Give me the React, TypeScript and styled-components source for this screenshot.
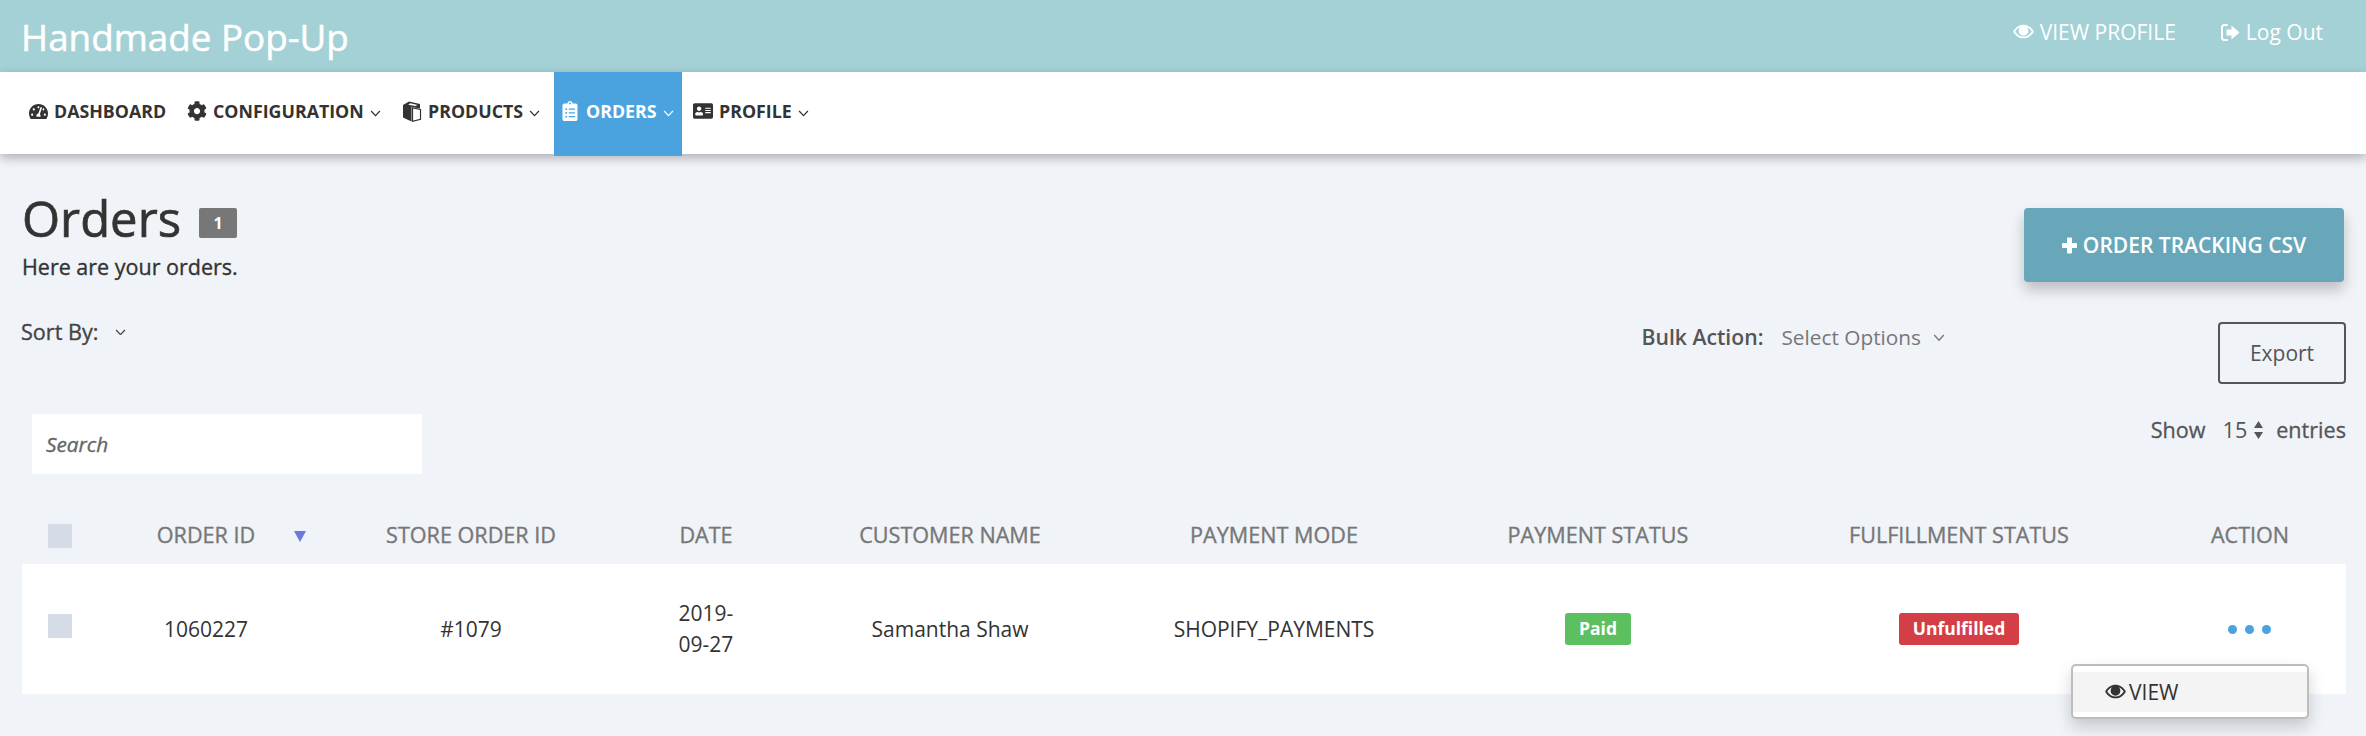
import React from "react";
import styled, { createGlobalStyle, css } from "styled-components";
import { FaTachometerAlt, FaCog, FaClipboardList, FaAddressCard } from "react-icons/fa";

const Global = createGlobalStyle`
  html, body { margin: 0; padding: 0; background: #f0f3f8; }
  body { font-family: "Open Sans", "Liberation Sans", sans-serif; color: #333; overflow: hidden; }
  * { box-sizing: border-box; }
`;

const medium = (w: number) => css`
  font-weight: 400;
  -webkit-text-stroke: ${w}px currentColor;
`;

const Page = styled.div`
  width: 2366px;
  height: 736px;
  overflow: hidden;
  background: #f0f3f8;
`;

const TopBar = styled.header`
  height: 72px;
  background: #a3d1d5;
  color: #fff;
  display: flex;
  align-items: center;
  justify-content: space-between;
  padding: 0 43px 0 21px;
`;

const Brand = styled.div`
  font-size: 36.8px;
  ${medium(0.5)}
  line-height: 72px;
  margin-top: 2px;
`;

const TopLinks = styled.div`
  display: flex;
  gap: 44px;
  margin-top: -8px;
`;

const TopLink = styled.a`
  display: flex;
  align-items: center;
  gap: 6px;
  font-size: 21px;
  color: #fff;
`;

const NavBar = styled.nav`
  position: relative;
  z-index: 2;
  height: 82px;
  background: #fff;
  box-shadow: 0 4px 10px rgba(0, 0, 0, 0.28);
  display: flex;
  align-items: flex-start;
  padding-left: 20px;
`;

const NavItem = styled.a<{ $active?: boolean; $w: number; $pad: number }>`
  width: ${(p) => p.$w}px;
  height: 84px;
  padding-left: ${(p) => p.$pad}px;
  padding-bottom: 6px;
  display: flex;
  align-items: center;
  font-size: 17.8px;
  font-weight: 700;
  color: ${(p) => (p.$active ? "#fff" : "#333")};
  background: ${(p) => (p.$active ? "#4aa3df" : "transparent")};
`;

const NavIcon = styled.span`
  width: 20px;
  margin-right: 6px;
  display: flex;
  justify-content: center;
  flex: none;
`;

const Chevron = styled.svg<{ $size?: number }>`
  width: ${(p) => p.$size ?? 11}px;
  height: ${(p) => (p.$size ?? 11) * 0.62}px;
  margin-left: 6px;
  margin-top: 5px;
  flex: none;
`;

const Main = styled.main`
  padding: 35px 20px 0 22px;
`;

const HeadRow = styled.div`
  display: flex;
  justify-content: space-between;
  align-items: flex-start;
  height: 133px;
`;

const TitleLine = styled.div`
  display: flex;
  align-items: center;
  height: 58px;
`;

const Title = styled.h1`
  margin: 0;
  font-size: 49px;
  ${medium(0.7)}
  line-height: 58px;
  color: #333;
`;

const CountBadge = styled.span`
  margin-left: 18px;
  margin-top: 9px;
  width: 38px;
  height: 30px;
  display: flex;
  align-items: center;
  justify-content: center;
  background: #777;
  border-radius: 2px;
  color: #fff;
  font-size: 16px;
  font-weight: 700;
`;

const SubTitle = styled.p`
  margin: 5px 0 0;
  font-size: 21.5px;
  ${medium(0.35)}
  line-height: 30px;
  color: #333;
`;

const TrackButton = styled.button`
  width: 320px;
  height: 74px;
  margin: 19px 2px 0 0;
  border: 0;
  border-radius: 4px;
  background: #68a7ba;
  color: #fff;
  font-family: inherit;
  font-size: 21px;
  font-weight: 600;
  display: flex;
  align-items: center;
  justify-content: center;
  gap: 6px;
  box-shadow: 0 8px 14px rgba(0, 0, 0, 0.22);
`;

const Controls = styled.div`
  display: flex;
  justify-content: space-between;
  align-items: flex-start;
  height: 94px;
`;

const SortBy = styled.div`
  display: flex;
  align-items: center;
  height: 30px;
  margin: -6px 0 0 -1px;
  font-size: 21.6px;
  ${medium(0.35)}
  color: #444;
`;

const SortChevron = styled(Chevron)`
  margin-left: 17px;
  margin-top: 2px;
`;

const RightControls = styled.div`
  display: flex;
  align-items: flex-start;
`;

const BulkLabel = styled.span`
  font-size: 21.2px;
  font-weight: 600;
  color: #555;
  line-height: 30px;
`;

const BulkSelect = styled.span`
  display: flex;
  align-items: center;
  height: 30px;
  margin: 0 0 0 18px;
  font-size: 20.8px;
  color: #777;
`;

const BulkChevron = styled(Chevron)`
  margin-left: 12px;
  margin-top: 2px;
`;

const ExportButton = styled.button`
  width: 128px;
  height: 62px;
  margin: 0 0 0 273px;
  border: 2px solid #555;
  border-radius: 4px;
  background: transparent;
  color: #555;
  font-family: inherit;
  font-size: 21px;
`;

const SearchRow = styled.div`
  display: flex;
  justify-content: space-between;
  align-items: flex-start;
  height: 90px;
  margin-top: -2px;
`;

const SearchBox = styled.div`
  width: 390px;
  height: 60px;
  margin-left: 10px;
  padding-left: 14px;
  background: #fff;
  display: flex;
  align-items: center;
  font-size: 20.8px;
  font-style: italic;
  ${medium(0.35)}
  color: #666;
`;

const ShowEntries = styled.div`
  display: flex;
  align-items: center;
  height: 30px;
  font-size: 21.6px;
  ${medium(0.3)}
  color: #555;
`;

const ShowValue = styled.span`
  margin-left: 17px;
  -webkit-text-stroke: 0;
  color: #555;
`;

const Stepper = styled.svg`
  width: 11px;
  height: 20px;
  margin: 2px 12px 0 6px;
`;

const Columns = "76px 216px 314px 156px 332px 316px 332px 390px 192px";

const HeaderRow = styled.div`
  display: grid;
  grid-template-columns: ${Columns};
  align-items: center;
  height: 60px;
`;

const HeaderCell = styled.div`
  text-align: center;
  font-size: 21.6px;
  ${medium(0.35)}
  color: #777;
`;

const OrderHeader = styled(HeaderCell)`
  position: relative;
`;

const SortArrow = styled.span`
  position: absolute;
  left: 196px;
  top: 11px;
  width: 0;
  height: 0;
  border-left: 6px solid transparent;
  border-right: 6px solid transparent;
  border-top: 11px solid #6c7ae0;
`;

const BodyRow = styled.div`
  display: grid;
  grid-template-columns: ${Columns};
  align-items: center;
  height: 130px;
  background: #fff;
  position: relative;
`;

const Cell = styled.div`
  text-align: center;
  font-size: 21px;
  line-height: 31px;
  color: #333;
`;

const Check = styled.span`
  display: block;
  width: 24px;
  height: 24px;
  margin: 4px 0 0 26px;
  background: #d5dce8;
`;

const RowCheck = styled(Check)`
  margin-top: -6px;
`;

const StatusBadge = styled.span<{ $tone: string }>`
  display: inline-block;
  padding: 0 14px;
  height: 32px;
  line-height: 31px;
  border-radius: 3px;
  background: ${(p) => p.$tone};
  color: #fff;
  font-size: 17.5px;
  font-weight: 700;
`;

const StatusCell = styled(Cell)`
  margin-top: -1px;
`;

const Dots = styled.div`
  display: flex;
  justify-content: center;
  gap: 8px;
  margin-left: -2px;
`;

const Dot = styled.span`
  width: 9px;
  height: 9px;
  border-radius: 50%;
  background: #4aa3df;
`;

const Menu = styled.div`
  position: absolute;
  left: 2049px;
  top: 100px;
  width: 238px;
  height: 55px;
  padding: 6px 0;
  background: #fff;
  border: 2px solid #bdbdbd;
  border-radius: 5px;
  box-shadow: 0 8px 16px rgba(0, 0, 0, 0.18);
`;

const MenuItem = styled.div`
  height: 40px;
  padding-left: 32px;
  background: #f4f4f4;
  display: flex;
  align-items: center;
  gap: 3px;
  font-size: 21px;
  color: #333;
`;

const chevron = (stroke: string, size?: number, As: typeof Chevron = Chevron) => (
  <As $size={size} viewBox="0 0 11 7" fill="none">
    <path d="M1 1l4.5 4.8L10 1" stroke={stroke} strokeWidth="1.3" />
  </As>
);

const Eye = ({ size, color }: { size: number; color: string }) => (
  <svg width={size} height={size * 0.72} viewBox="0 0 28 20" fill={color}>
    <path fillRule="evenodd" d="M14 1C8.4 1 3.6 4.3 .6 9.2a1.6 1.6 0 0 0 0 1.6C3.6 15.700 8.400 19 14 19s10.400-3.300 13.400-8.200a1.600 1.600 0 0 0 0-1.600C24.400 4.300 19.600 1 14 1zM3 10c1.600-2.500 3.800-4.500 6.500-5.700A6.500 6.500 0 1 0 18.500 4.300C21.200 5.500 23.400 7.500 25 10c-2.600 4-6.500 6.700-11 6.700S5.600 14 3 10z" />
    <circle cx="12" cy="7.500" r="2.200" fill={color} />
  </svg>
);

const SignOut = () => (
  <svg width="20" height="19" viewBox="0 0 20 19" fill="none">
    <path d="M7 2H4.500A2.500 2.500 0 0 0 2 4.500v10A2.500 2.500 0 0 0 4.500 17H7" stroke="#fff" strokeWidth="2" strokeLinecap="round" />
    <path d="M11.500 2.500L19.500 9.500l-8 7v-4H6.500v-6h5z" fill="#fff" />
  </svg>
);

const Cube = () => (
  <svg width="20" height="21" viewBox="0 0 20 21">
    <path d="M1 4l6-3.500 11 2.500v4.500L9.500 5.800V20.500L1 16.500z" fill="#333" />
    <path d="M10.500 6.800l8 1.700v9.800l-8 2z" fill="#fff" stroke="#333" strokeWidth="1.200" />
    <path d="M8.200 2.300l7.500 1.600-2.500 1.200-7-1.400z" fill="#fff" />
  </svg>
);

const ThickPlus = () => (
  <svg width="15" height="17" viewBox="0 0 15 17" fill="#fff">
    <path d="M5 1.500A1 1 0 0 1 6 .5h3a1 1 0 0 1 1 1V6h4a1 1 0 0 1 1 1v3a1 1 0 0 1-1 1h-4v4.500a1 1 0 0 1-1 1H6a1 1 0 0 1-1-1V11H1a1 1 0 0 1-1-1V7a1 1 0 0 1 1-1h4z" />
  </svg>
);

const headers = ["STORE ORDER ID", "DATE", "CUSTOMER NAME", "PAYMENT MODE", "PAYMENT STATUS", "FULFILLMENT STATUS", "ACTION"];

export default function App() {
  return (
    <Page>
      <Global />
      <TopBar>
        <Brand>Handmade Pop-Up</Brand>
        <TopLinks>
          <TopLink><Eye size={21} color="#fff" />VIEW PROFILE</TopLink>
          <TopLink><SignOut />Log Out</TopLink>
        </TopLinks>
      </TopBar>
      <NavBar>
        <NavItem $w={159} $pad={8}><NavIcon><FaTachometerAlt size={19} /></NavIcon>DASHBOARD</NavItem>
        <NavItem $w={215} $pad={8}><NavIcon><FaCog size={20} /></NavIcon>CONFIGURATION{chevron("#333")}</NavItem>
        <NavItem $w={160} $pad={8}><NavIcon><Cube /></NavIcon>PRODUCTS{chevron("#333")}</NavItem>
        <NavItem $active $w={128} $pad={6}><NavIcon><FaClipboardList size={20} /></NavIcon>ORDERS{chevron("#fff")}</NavItem>
        <NavItem $w={130} $pad={11}><NavIcon><FaAddressCard size={20} /></NavIcon>PROFILE{chevron("#333")}</NavItem>
      </NavBar>
      <Main>
        <HeadRow>
          <div>
            <TitleLine>
              <Title>Orders</Title>
              <CountBadge>1</CountBadge>
            </TitleLine>
            <SubTitle>Here are your orders.</SubTitle>
          </div>
          <TrackButton><ThickPlus />ORDER TRACKING CSV</TrackButton>
        </HeadRow>
        <Controls>
          <SortBy>Sort By:{chevron("#444", 11, SortChevron)}</SortBy>
          <RightControls>
            <BulkLabel>Bulk Action:</BulkLabel>
            <BulkSelect>Select Options{chevron("#777", 12, BulkChevron)}</BulkSelect>
            <ExportButton>Export</ExportButton>
          </RightControls>
        </Controls>
        <SearchRow>
          <SearchBox>Search</SearchBox>
          <ShowEntries>
            Show
            <ShowValue>15</ShowValue>
            <Stepper viewBox="0 0 11 20" fill="#555">
              <path d="M5.500 1L10 8H1zM5.500 19L1 12h9z" />
            </Stepper>
            entries
          </ShowEntries>
        </SearchRow>
        <HeaderRow>
          <div><Check /></div>
          <OrderHeader>ORDER ID<SortArrow /></OrderHeader>
          {headers.map((h) => <HeaderCell key={h}>{h}</HeaderCell>)}
        </HeaderRow>
        <BodyRow>
          <div><RowCheck /></div>
          <Cell>1060227</Cell>
          <Cell>#1079</Cell>
          <Cell>2019-<br />09-27</Cell>
          <Cell>Samantha Shaw</Cell>
          <Cell>SHOPIFY_PAYMENTS</Cell>
          <StatusCell><StatusBadge $tone="#5cbf60">Paid</StatusBadge></StatusCell>
          <StatusCell><StatusBadge $tone="#d43f47">Unfulfilled</StatusBadge></StatusCell>
          <Dots><Dot /><Dot /><Dot /></Dots>
          <Menu><MenuItem><Eye size={21} color="#333" />VIEW</MenuItem></Menu>
        </BodyRow>
      </Main>
    </Page>
  );
}
